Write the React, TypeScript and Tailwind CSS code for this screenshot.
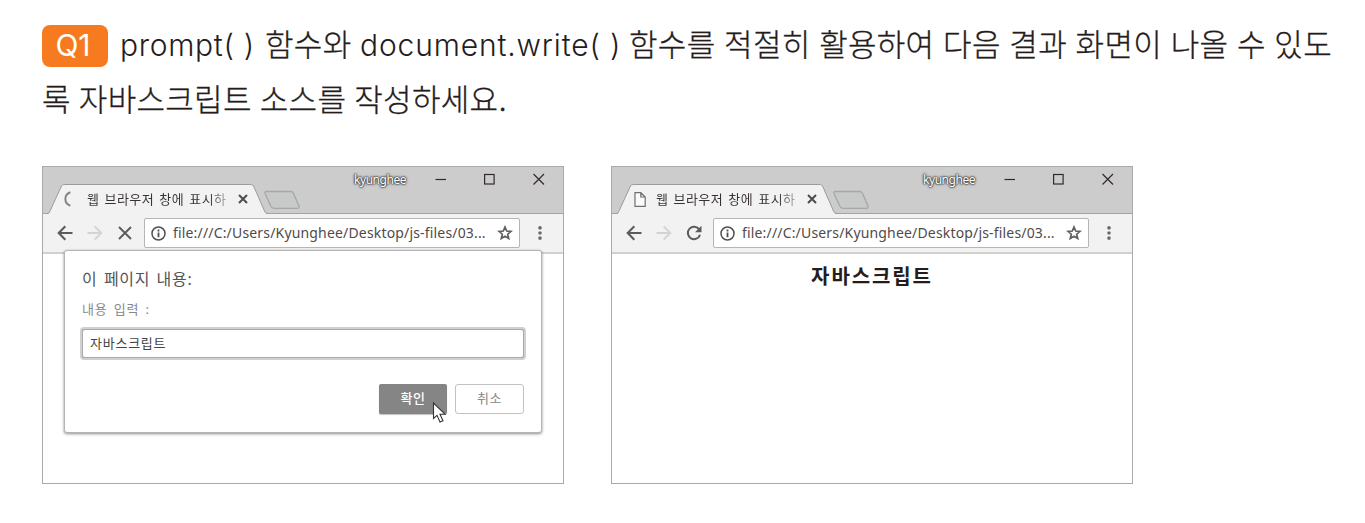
import React from "react";

const KR = "font-['Noto_Sans','Noto_Sans_CJK_KR',sans-serif]";

function TabShape() {
  return (
    <svg className="absolute inset-0" width="222" height="31" viewBox="0 0 222 31" fill="none">
      <path d="M0 30.5 C2 29.5 2 29 3 27 L14 3 C15 1 15.5 .5 18 .5 H203 C205.500 .5 206 1 207 3 L217.500 27 C218.500 29 219 30 221 30.500 V31 H0 Z" fill="#f2f2f2" />
      <path d="M0 29.500 C2 29.500 2 29 3 27 L14 3 C15 1 15.500 .5 18 .5 H203 C205.500 .5 206 1 207 3 L217.500 27 C218.500 29 219 29.500 221 29.500" stroke="#9b9b9b" />
    </svg>
  );
}

function NewTabShape() {
  return (
    <svg className="mt-[23px] ml-[-6px] shrink-0" width="38" height="20" viewBox="0 0 38 20" fill="none">
      <path d="M3.300 1.500 H27.500 Q29.500 1.500 30.300 3 L36 16 Q36.700 18.300 34.700 18.300 H11 Q9 18.300 8 16.500 L2 3.500 Q1.500 1.500 3.300 1.500 Z" fill="#c7cac8" stroke="#a5a8a6" strokeWidth="1.300" />
    </svg>
  );
}

function WindowControls() {
  return (
    <svg className="mt-[5px] ml-auto shrink-0" width="128" height="14" viewBox="0 0 128 14" fill="none" stroke="#33292a">
      <path d="M.5 7.500 H11" strokeWidth="1.200" />
      <rect x="49.600" y="2.500" width="9.500" height="9.500" strokeWidth="1.200" />
      <path d="M98.500 2 L109 12.500 M109 2 L98.500 12.500" strokeWidth="1.200" />
    </svg>
  );
}

function BackArrow() {
  return (
    <svg width="16" height="16" viewBox="0 0 16 16" fill="none" stroke="#5c5c5c" strokeWidth="2.100">
      <path d="M15.500 8 H2 M8.300 1.300 L1.700 8 L8.300 14.700" />
    </svg>
  );
}

function ForwardArrow() {
  return (
    <svg width="16" height="16" viewBox="0 0 16 16" fill="none" stroke="#d3d3d3" strokeWidth="1.900">
      <path d="M.5 8 H14 M7.700 1.300 L14.300 8 L7.700 14.700" />
    </svg>
  );
}

function StopIcon() {
  return (
    <svg width="16" height="16" viewBox="0 0 16 16" fill="none" stroke="#5c5c5c" strokeWidth="1.900">
      <path d="M2 2 L14 14 M14 2 L2 14" />
    </svg>
  );
}

function ReloadIcon() {
  return (
    <svg width="16" height="16" viewBox="0 0 16 16" fill="none">
      <path d="M13.300 4.600 A6.200 6.200 0 1 0 14 9.700" stroke="#5c5c5c" strokeWidth="2" />
      <path d="M15.500 .8 V7.200 H9 Z" fill="#5c5c5c" />
    </svg>
  );
}

function InfoIcon() {
  return (
    <svg className="shrink-0" width="15" height="15" viewBox="0 0 15 15" fill="none">
      <circle cx="7.500" cy="7.500" r="6.500" stroke="#505050" strokeWidth="1.500" />
      <path d="M7.500 6.500 V11.200 M7.500 3.600 V5.400" stroke="#505050" strokeWidth="1.800" />
    </svg>
  );
}

function StarIcon() {
  return (
    <svg className="shrink-0" width="16" height="16" viewBox="0 0 16 16" fill="none">
      <path d="M8 2 L9.700 6 L14 6.400 L10.700 9.200 L11.700 13.500 L8 11.200 L4.300 13.500 L5.300 9.200 L2 6.400 L6.300 6 Z" stroke="#5f5f5f" strokeWidth="1.700" />
    </svg>
  );
}

function MenuDots() {
  return (
    <svg width="4" height="16" viewBox="0 0 4 16" fill="#666">
      <rect x=".4" y="1.200" width="3.200" height="3.200" rx="1" />
      <rect x=".4" y="6.400" width="3.200" height="3.200" rx="1" />
      <rect x=".4" y="11.600" width="3.200" height="3.200" rx="1" />
    </svg>
  );
}

function SpinnerIcon() {
  return (
    <svg width="16" height="16" viewBox="0 0 16 16" fill="none">
      <path d="M7.300 1.300 C.7 3.800 .7 12.200 7.300 14.700" stroke="#858585" strokeWidth="2" />
    </svg>
  );
}

function PageIcon() {
  return (
    <svg width="16" height="16" viewBox="0 0 16 16" fill="none" stroke="#707070" strokeWidth="1.200">
      <path d="M3 1.600 H8.800 L13.200 6 V15.300 H3 Z M8.800 1.600 V6 H13.200" fill="#fbfbfb" />
    </svg>
  );
}

function Cursor() {
  return (
    <svg className="absolute left-[367px] top-[151px]" width="15" height="22" viewBox="0 0 15 22">
      <path d="M1.500 1 V16.500 L5 13.300 L8 20 L11 18.700 L8 12.200 H13 Z" fill="#fff" stroke="#3a3232" strokeWidth="1.100" />
    </svg>
  );
}

function BrowserWindow({ loading, children }: { loading?: boolean; children: React.ReactNode }) {
  return (
    <section className="relative flex h-[318px] w-[522px] flex-col border border-[#a9abaa] bg-white">
      <header className="flex h-[47px] shrink-0 border-b border-[#a3a3a3] bg-[#cccccc]">
        <div className="relative mt-[17px] ml-[4px] h-[31px] w-[222px] shrink-0">
          <TabShape />
          <div className="relative flex h-[30px] items-center">
            <span className="ml-[16px] w-[16px]">{loading ? <SpinnerIcon /> : <PageIcon />}</span>
            <span className="ml-[8px] w-[143px] overflow-hidden bg-linear-to-r from-[#383232] from-85% to-[#cccccc] bg-clip-text text-[13px] leading-[20px] tracking-[0.45px] [word-spacing:1.300px] whitespace-nowrap text-transparent">
              웹 브라우저 창에 표시하
            </span>
            <svg className="ml-[8px]" width="10" height="10" viewBox="0 0 10 10" stroke="#4c4c4c" strokeWidth="2">
              <path d="M1 1 L9 9 M9 1 L1 9" />
            </svg>
          </div>
        </div>
        <NewTabShape />
        <span className="mt-[4px] ml-[53px] w-[56px] shrink-0 text-[12px] leading-[18px] tracking-[-0.45px] text-white [text-shadow:0_0_1px_#333,0_0_2px_#333,0_0_2px_#444,0_0_3px_#666]">
          kyunghee
        </span>
        <WindowControls />
      </header>
      <div className="flex h-[40px] shrink-0 items-center border-b-2 border-[#d0d0d0] bg-[#f2f2f2]">
        <div className="ml-[14px] flex gap-[14px]">
          <BackArrow />
          <ForwardArrow />
          {loading ? <StopIcon /> : <ReloadIcon />}
        </div>
        <div className="ml-[11px] flex h-[30px] w-[376px] items-center rounded-[2px] border border-[#b5b5b5] bg-white">
          <span className="ml-[6px]"><InfoIcon /></span>
          <span className="ml-[7px] w-[316px] text-[14px] leading-[20px] tracking-[0.170px] whitespace-nowrap text-[#504a4a]">
            file:///C:/Users/Kyunghee/Desktop/js-files/03...
          </span>
          <span className="ml-[8px]"><StarIcon /></span>
        </div>
        <span className="ml-[18px]"><MenuDots /></span>
      </div>
      {children}
    </section>
  );
}

function PromptDialog() {
  return (
    <div className="absolute top-[83px] left-[21px] h-[183px] w-[478px] rounded-[3px] border border-[#b4b4b4] bg-white px-[17px] shadow-[0_1px_3px_rgba(0,0,0,0.45)]">
      <h2 className="mt-[16px] text-[16px] leading-[24px] tracking-[0.7px] [word-spacing:1.600px] text-[#555]">이 페이지 내용:</h2>
      <p className="mt-[8px] text-[13px] leading-[20px] tracking-[0.900px] [word-spacing:1.700px] text-[#888]">내용 입력 :</p>
      <div className="mt-[8px] -ml-[2px] flex h-[33px] w-[446px] items-center rounded-[4px] border-2 border-[#cfd0cf] bg-[#a9aaa9] p-px">
        <div className="flex h-full w-full items-center rounded-[2px] bg-white pl-[7px] text-[13px] tracking-[0.75px] text-[#444]">
          자바스크립트
        </div>
      </div>
      <div className="mt-[24px] flex justify-end gap-[8px] text-[13px] tracking-[0.5px]">
        <span className="flex h-[30px] w-[68px] items-center justify-center rounded-[2px] bg-[#858585] font-medium text-white shadow-[0_1px_1px_rgba(0,0,0,0.25)]">
          확인
        </span>
        <span className="flex h-[30px] w-[69px] items-center justify-center rounded-[3px] border border-[#c2c2c2] text-[#888]">
          취소
        </span>
      </div>
      <Cursor />
    </div>
  );
}

export default function App() {
  return (
    <main className={`h-[523px] w-[1365px] overflow-hidden bg-white pt-[18px] pl-[42px] ${KR}`}>
      <div className="font-['Inter','Noto_Sans_CJK_KR',sans-serif] text-[30px] font-light whitespace-nowrap text-[#251c1b]">
        <div className="flex h-[54px] items-center">
          <span className="mt-[2px] mr-[12px] flex h-[42px] w-[66px] items-center justify-center rounded-[8px] bg-[#f67b20] pr-[4px] pb-[2px] text-[30px] font-normal text-white">Q1</span>
          <span className="w-[145px] tracking-[0.7px]">prompt( )</span>
          <span className="w-[95px] text-[31px] tracking-[0.350px] [-webkit-text-stroke:0.3px_#251c1b]">함수와</span>
          <span className="w-[269px] tracking-[0.85px]">document.write( )</span>
          <span className="text-[31px] tracking-[0.3px] [word-spacing:-0.4px] [-webkit-text-stroke:0.3px_#251c1b]">함수를 적절히 활용하여 다음 결과 화면이 나올 수 있도</span>
        </div>
        <div className="flex h-[54px] items-center pt-[2px] text-[31px] tracking-[0.3px] [word-spacing:-1px] [-webkit-text-stroke:0.3px_#251c1b]">록 자바스크립트 소스를 작성하세요.</div>
      </div>
      <div className="mt-[40px] flex gap-[47px]">
        <BrowserWindow loading>
          <PromptDialog />
        </BrowserWindow>
        <BrowserWindow>
          <strong className="mt-[9px] text-center text-[20px] leading-[28px] tracking-[1.9px] text-[#251c1b]">자바스크립트</strong>
        </BrowserWindow>
      </div>
    </main>
  );
}
